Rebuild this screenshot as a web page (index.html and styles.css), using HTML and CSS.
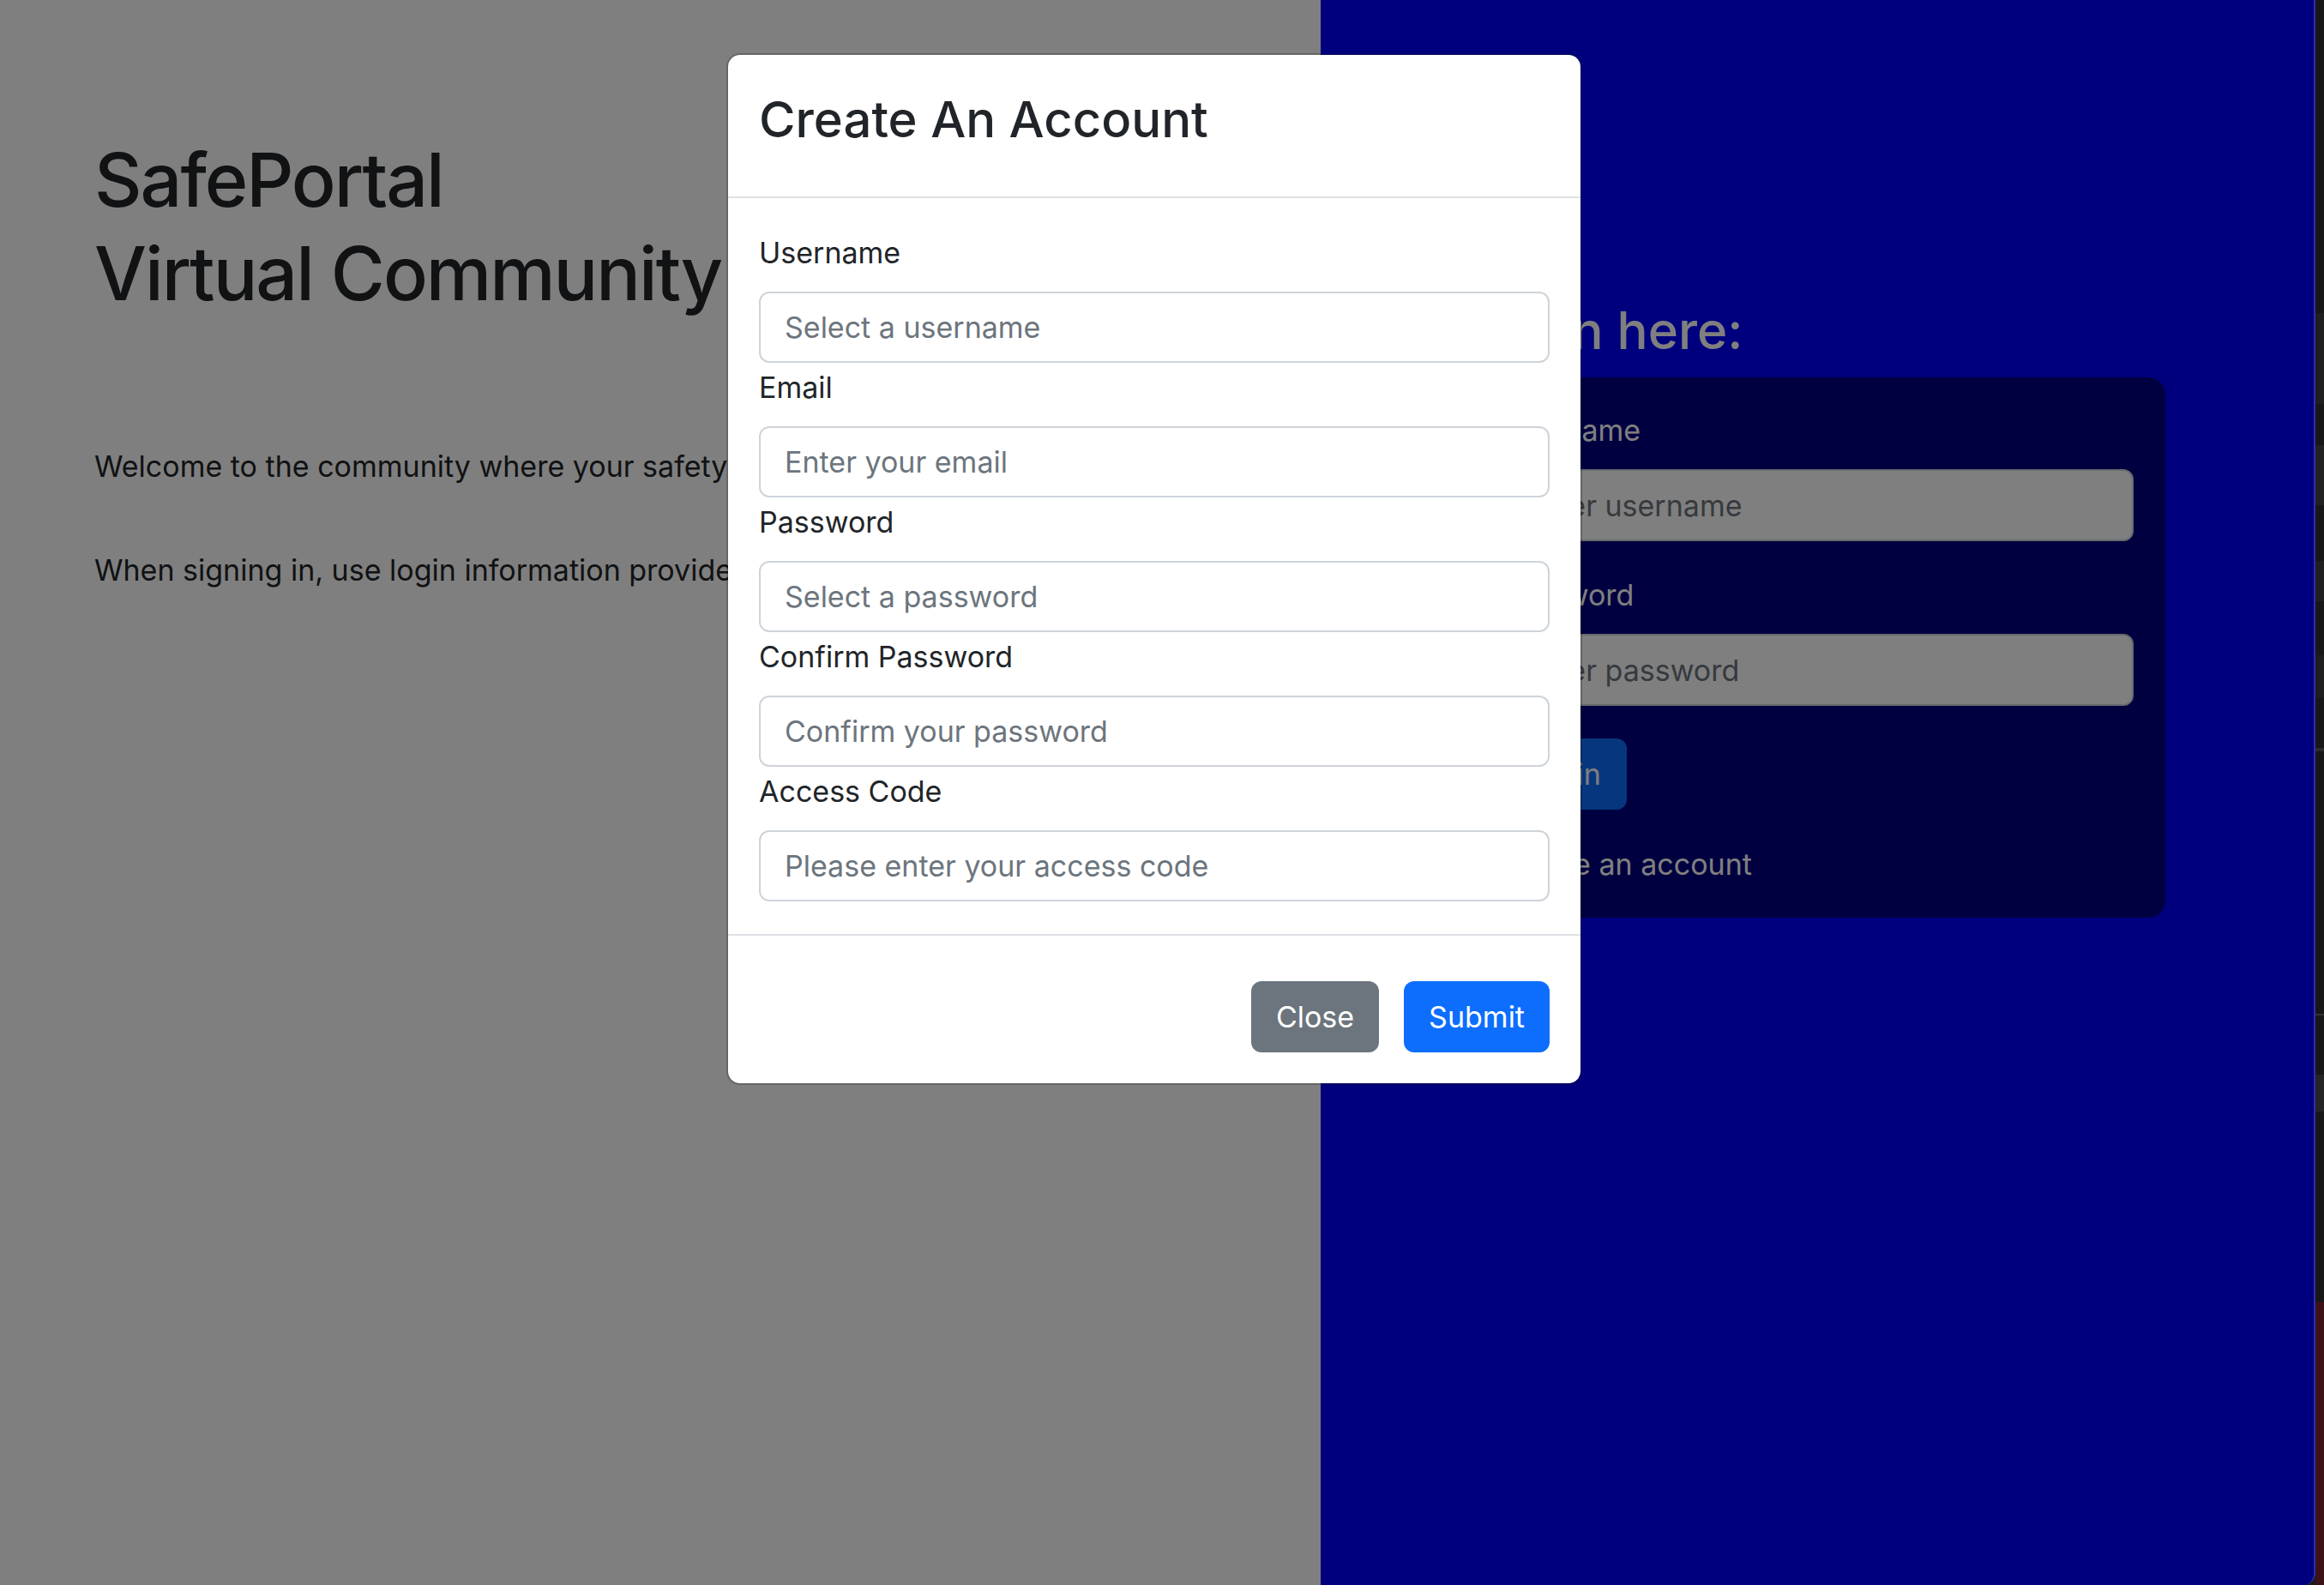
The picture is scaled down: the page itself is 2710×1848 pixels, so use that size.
FILE: index.html
```html
<!DOCTYPE html>
<html lang="en">
<head>
<meta charset="utf-8">
<title>SafePortal Virtual Community</title>
<link rel="stylesheet" href="styles.css">
</head>
<body>
  <div class="window">
    <main class="page">
      <section class="intro">
        <h1 class="intro-title">SafePortal<br>Virtual Community</h1>
        <p class="intro-text first">Welcome to the community where your safety is our first priority.</p>
        <p class="intro-text">When signing in, use login information provided by your administrator.</p>
      </section>
      <section class="signin">
        <h2 class="signin-title">Login here:</h2>
        <form class="signin-card">
          <div class="signin-field">
            <label class="signin-label">Username</label>
            <input class="signin-input" type="text" placeholder="Enter username">
          </div>
          <div class="signin-field">
            <label class="signin-label">Password</label>
            <input class="signin-input" type="password" placeholder="Enter password">
          </div>
          <div class="signin-field">
            <button class="signin-button" type="button">Login</button>
          </div>
          <a class="signin-link">Create an account</a>
        </form>
      </section>
    </main>
    <div class="backdrop"></div>
    <div class="modal">
      <div class="modal-header">
        <h2 class="modal-title">Create An Account</h2>
      </div>
      <div class="modal-body">
        <div class="field">
          <label class="field-label">Username</label>
          <input class="field-input" type="text" placeholder="Select a username">
        </div>
        <div class="field">
          <label class="field-label">Email</label>
          <input class="field-input" type="email" placeholder="Enter your email">
        </div>
        <div class="field">
          <label class="field-label">Password</label>
          <input class="field-input" type="password" placeholder="Select a password">
        </div>
        <div class="field">
          <label class="field-label">Confirm Password</label>
          <input class="field-input" type="password" placeholder="Confirm your password">
        </div>
        <div class="field">
          <label class="field-label">Access Code</label>
          <input class="field-input" type="text" placeholder="Please enter your access code">
        </div>
      </div>
      <div class="modal-footer">
        <button class="btn btn-secondary" type="button">Close</button>
        <button class="btn btn-primary" type="button">Submit</button>
      </div>
    </div>
  </div>
  <aside class="side-strip">
    <div class="strip-band b1"></div>
    <div class="strip-band b2"></div>
    <div class="strip-band b3"></div>
    <div class="strip-band b4"></div>
    <div class="strip-band b5"></div>
    <div class="strip-band b6"></div>
    <div class="strip-band b7"></div>
    <div class="strip-red"></div>
  </aside>
</body>
</html>
```

FILE: styles.css
```css
* {
  box-sizing: border-box;
}

html, body {
  margin: 0;
  padding: 0;
}

body {
  width: 2710px;
  height: 1848px;
  display: flex;
  background: #1a1a1a;
  font-family: "Inter", "Noto Sans", "Liberation Sans", sans-serif;
  color: #212529;
  overflow: hidden;
}

.window {
  position: relative;
  width: 2700px;
  height: 1848px;
  border-right: 2px solid #2d2dae;
  border-bottom-right-radius: 14px;
  overflow: hidden;
}

.page {
  display: grid;
  grid-template-columns: 1540px 1fr;
  height: 100%;
}

/* Left intro column */
.intro {
  background: #ffffff;
  padding: 156px 0 0 110px;
}

.intro-title {
  margin: 0 0 144px;
  font-size: 86px;
  line-height: 109px;
  font-weight: 500;
  letter-spacing: -2px;
  color: #212529;
  white-space: nowrap;
}

.intro-text {
  margin: 0 0 70px;
  font-size: 34px;
  line-height: 51px;
  white-space: nowrap;
}

/* Right sign-in column */
.signin {
  background: #0000ff;
  padding: 349px 173px 0 171px;
}

.signin-title {
  margin: 0 0 19px;
  font-size: 60px;
  line-height: 72px;
  font-weight: 500;
  color: #ffffff;
}

.signin-card {
  background: #000080;
  border-radius: 20px;
  padding: 37px;
  display: flex;
  flex-direction: column;
}

.signin-field {
  margin-bottom: 38px;
  display: flex;
  flex-direction: column;
  align-items: flex-start;
}

.signin-label {
  font-size: 34px;
  line-height: 50px;
  color: #ffffff;
  margin-bottom: 20px;
}

.signin-input {
  width: 100%;
  height: 84px;
  border: 2px solid #ced4da;
  border-radius: 12px;
  padding: 0 28px;
  font-family: inherit;
  font-size: 34px;
  background: #ffffff;
}

.signin-input::placeholder {
  color: #6c757d;
}

.signin-button {
  height: 83px;
  padding: 0 30px;
  border: none;
  border-radius: 12px;
  background: #0d6efd;
  color: #ffffff;
  font-family: inherit;
  font-size: 34px;
}

.signin-link {
  font-size: 34px;
  line-height: 51px;
  color: #ffffff;
}

/* Backdrop */
.backdrop {
  position: absolute;
  inset: 0;
  background: rgba(0, 0, 0, 0.5);
}

/* Modal */
.modal {
  position: absolute;
  left: 847px;
  top: 62px;
  width: 998px;
  background: #ffffff;
  border: 2px solid rgba(0, 0, 0, 0.2);
  border-radius: 16px;
  background-clip: padding-box;
}

.modal-header {
  padding: 39px 36px 54px;
  border-bottom: 2px solid #dee2e6;
}

.modal-title {
  margin: 0;
  font-size: 58px;
  line-height: 72px;
  font-weight: 500;
  color: #212529;
}

.modal-body {
  padding: 39px 36px 34px;
}

.field {
  display: flex;
  flex-direction: column;
  margin-bottom: 4px;
}

.field-label {
  font-size: 34px;
  line-height: 50px;
  margin-bottom: 20px;
  color: #212529;
}

.field-input {
  height: 83px;
  border: 2px solid #ced4da;
  border-radius: 12px;
  padding: 0 28px;
  font-family: inherit;
  font-size: 34px;
  color: #212529;
  background: #ffffff;
}

.field-input::placeholder {
  color: #6c757d;
}

.modal-footer {
  border-top: 2px solid #dee2e6;
  padding: 53px 36px 36px;
  display: flex;
  justify-content: flex-end;
  gap: 29px;
}

.btn {
  height: 83px;
  padding: 0 29px;
  border: none;
  border-radius: 12px;
  font-family: inherit;
  font-size: 34px;
  color: #ffffff;
}

.btn-secondary {
  background: #6c757d;
}

.btn-primary {
  background: #0d6efd;
}

/* Right-hand dark strip (neighbouring window) */
.side-strip {
  flex: 1;
  display: flex;
  flex-direction: column;
  background: #181818;
}

.strip-band {
  height: 6px;
  background: #2a2a2a;
}

.b1 { margin-top: 365px; height: 106px; background: #1f1f1f; }
.b2 { margin-top: 48px; height: 70px; background: #222222; }
.b3 { margin-top: 65px; height: 47px; background: #202020; }
.b4 { margin-top: 63px; height: 49px; background: #1f1f1f; }
.b5 { margin-top: 59px; height: 4px; background: #2c2c2c; }
.b6 { margin-top: 306px; height: 2px; background: #333333; }
.b7 { margin-top: 69px; height: 43px; background: #252525; }

.strip-red {
  margin-top: auto;
  height: 330px;
  background: #3d1217;
}
```
